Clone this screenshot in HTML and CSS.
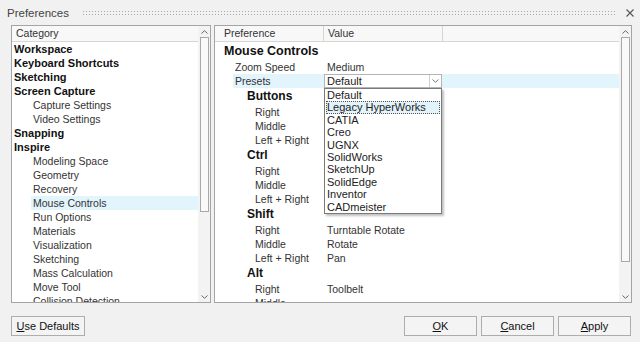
FILE: index.html
```html
<!DOCTYPE html>
<html lang="en">

<head>
    <meta charset="UTF-8">
    <meta name="viewport" content="width=device-width, initial-scale=1.0">
    <title>Preferences</title>
    <link rel="stylesheet" href="styles.css">
</head>

<body>
    <div class="dialog">
        <div class="titlebar">
            <span class="title">Preferences</span>
            <span class="grip"></span>
            <svg class="close" width="8" height="8" viewBox="0 0 8 8">
                <path d="M0.5 0.5 L7.5 7.5 M7.5 0.5 L0.5 7.5" stroke="#555" stroke-width="1.1" fill="none" />
            </svg>
        </div>

        <div class="main">
            <div class="panel leftPanel">
                <div class="list">
                    <div class="hdr">
                        <span class="hcell catCell">Category</span>
                    </div>
                    <div class="item top">Workspace</div>
                    <div class="item top">Keyboard Shortcuts</div>
                    <div class="item top">Sketching</div>
                    <div class="item top">Screen Capture</div>
                    <div class="item sub">Capture Settings</div>
                    <div class="item sub">Video Settings</div>
                    <div class="item top">Snapping</div>
                    <div class="item top">Inspire</div>
                    <div class="item sub">Modeling Space</div>
                    <div class="item sub">Geometry</div>
                    <div class="item sub">Recovery</div>
                    <div class="item sub selected">Mouse Controls</div>
                    <div class="item sub">Run Options</div>
                    <div class="item sub">Materials</div>
                    <div class="item sub">Visualization</div>
                    <div class="item sub">Sketching</div>
                    <div class="item sub">Mass Calculation</div>
                    <div class="item sub">Move Tool</div>
                    <div class="item sub">Collision Detection</div>
                </div>
                <div class="scrollbar">
                    <div class="arrow">
                        <svg width="7" height="4" viewBox="0 0 7 4"><path d="M0.5 3.5 L3.5 0.7 L6.5 3.5" stroke="#666" fill="none" /></svg>
                    </div>
                    <div class="track">
                        <div class="thumb leftThumb"></div>
                    </div>
                    <div class="arrow">
                        <svg width="7" height="4" viewBox="0 0 7 4"><path d="M0.5 0.5 L3.5 3.3 L6.5 0.5" stroke="#666" fill="none" /></svg>
                    </div>
                </div>
            </div>

            <div class="panel rightPanel">
                <div class="list">
                    <div class="hdr">
                        <span class="hcell prefCell">Preference</span>
                        <span class="hcell valCell">Value</span>
                        <span class="hcell restCell"></span>
                    </div>

                    <div class="heading">Mouse Controls</div>
                    <div class="row lvl1"><span class="label">Zoom Speed</span><span class="value">Medium</span></div>
                    <div class="row lvl1 selected">
                        <span class="label">Presets</span>
                        <span class="value">
                            <span class="combo">
                                <span class="comboText">Default</span>
                                <span class="comboBtn">
                                    <svg width="7" height="4" viewBox="0 0 7 4"><path d="M0.5 0.5 L3.5 3.3 L6.5 0.5" stroke="#777" fill="none" /></svg>
                                </span>
                                <span class="dropdown">
                                    <span class="opt">Default</span>
                                    <span class="opt focused">Legacy HyperWorks</span>
                                    <span class="opt">CATIA</span>
                                    <span class="opt">Creo</span>
                                    <span class="opt">UGNX</span>
                                    <span class="opt">SolidWorks</span>
                                    <span class="opt">SketchUp</span>
                                    <span class="opt">SolidEdge</span>
                                    <span class="opt">Inventor</span>
                                    <span class="opt">CADmeister</span>
                                </span>
                            </span>
                        </span>
                    </div>

                    <div class="group">Buttons</div>
                    <div class="row lvl2"><span class="label">Right</span><span class="value"></span></div>
                    <div class="row lvl2"><span class="label">Middle</span><span class="value"></span></div>
                    <div class="row lvl2"><span class="label">Left + Right</span><span class="value"></span></div>

                    <div class="group">Ctrl</div>
                    <div class="row lvl2"><span class="label">Right</span><span class="value"></span></div>
                    <div class="row lvl2"><span class="label">Middle</span><span class="value"></span></div>
                    <div class="row lvl2"><span class="label">Left + Right</span><span class="value"></span></div>

                    <div class="group">Shift</div>
                    <div class="row lvl2"><span class="label">Right</span><span class="value">Turntable Rotate</span></div>
                    <div class="row lvl2"><span class="label">Middle</span><span class="value">Rotate</span></div>
                    <div class="row lvl2"><span class="label">Left + Right</span><span class="value">Pan</span></div>

                    <div class="group">Alt</div>
                    <div class="row lvl2"><span class="label">Right</span><span class="value">Toolbelt</span></div>
                    <div class="row lvl2"><span class="label">Middle</span><span class="value"></span></div>
                </div>
                <div class="scrollbar">
                    <div class="arrow">
                        <svg width="7" height="4" viewBox="0 0 7 4"><path d="M0.5 3.5 L3.5 0.7 L6.5 3.5" stroke="#666" fill="none" /></svg>
                    </div>
                    <div class="track">
                        <div class="thumb rightThumb"></div>
                    </div>
                    <div class="arrow">
                        <svg width="7" height="4" viewBox="0 0 7 4"><path d="M0.5 0.5 L3.5 3.3 L6.5 0.5" stroke="#666" fill="none" /></svg>
                    </div>
                </div>
            </div>
        </div>

        <div class="footer">
            <button class="btn"><u>U</u>se Defaults</button>
            <span class="spacer"></span>
            <button class="btn"><u>O</u>K</button>
            <button class="btn"><u>C</u>ancel</button>
            <button class="btn"><u>A</u>pply</button>
        </div>
    </div>
</body>

</html>
```

FILE: styles.css
```css
body {
    margin: 0;
    overflow: hidden;
    background-color: #f1f1f1;
    font-family: "Liberation Sans", Arial, sans-serif;
    color: #222;
}

.dialog {
    width: 640px;
    height: 342px;
    display: flex;
    flex-direction: column;
}

.titlebar {
    height: 25px;
    display: flex;
    align-items: center;
}

.title {
    padding-left: 7px;
    font-size: 11.5px;
    color: #444;
}

.grip {
    flex: 1;
    height: 6px;
    margin: 0 10px 0 13px;
    background-image: radial-gradient(circle, #a8a8a8 0.8px, transparent 0.9px);
    background-size: 3px 3px;
}

.close {
    margin-right: 6px;
}

.main {
    height: 278px;
    display: flex;
    gap: 3px;
    padding: 0 8px 0 11px;
}

.panel {
    box-sizing: border-box;
    height: 100%;
    border: 1px solid #a4a4a4;
    background-color: white;
    display: flex;
    overflow: hidden;
}

.leftPanel {
    width: 200px;
}

.rightPanel {
    width: 418px;
}

.list {
    flex: 1;
    overflow: hidden;
}

.hdr {
    height: 15px;
    border-bottom: 1px solid #d6d6d6;
    background-color: #f8f8f8;
    display: flex;
    font-size: 10.5px;
    line-height: 15px;
    color: #333;
}

.hcell {
    box-sizing: border-box;
    height: 15px;
}

.catCell {
    padding-left: 4px;
}

.prefCell {
    width: 109px;
    padding-left: 9px;
    border-right: 1px solid #d6d6d6;
}

.valCell {
    width: 119px;
    padding-left: 4px;
    border-right: 1px solid #d6d6d6;
}

.item {
    height: 14px;
    line-height: 14px;
    padding-left: 2px;
    white-space: nowrap;
}

.item.top {
    font-size: 11px;
    font-weight: bold;
    color: #111;
}

.item.sub {
    margin-left: 19px;
    font-size: 10.5px;
    color: #333;
}

.selected {
    background-color: #e2f5fd;
}

.heading {
    height: 18px;
    line-height: 18px;
    padding-left: 9px;
    font-size: 12.5px;
    font-weight: bold;
    color: #111;
}

.group {
    height: 17px;
    line-height: 17px;
    padding-left: 32px;
    font-size: 12px;
    font-weight: bold;
    color: #111;
}

.row {
    height: 14px;
    line-height: 14px;
    display: flex;
    font-size: 10.5px;
    color: #333;
    white-space: nowrap;
}

.row.lvl1 {
    margin-left: 18px;
}

.row.lvl2 {
    margin-left: 38px;
}

.label {
    box-sizing: border-box;
    padding-left: 2px;
}

.lvl1 .label {
    width: 91px;
}

.lvl2 .label {
    width: 71px;
}

.value {
    padding-left: 3px;
    flex: 1;
}

.lvl1.selected .value {
    padding-left: 0;
}

.combo {
    position: relative;
    box-sizing: border-box;
    display: flex;
    width: 118px;
    height: 14px;
    border: 1px solid #b4b4b4;
    background-color: white;
    line-height: 12px;
}

.comboText {
    flex: 1;
    padding-left: 2px;
    font-size: 11px;
    color: #222;
}

.comboBtn {
    width: 11px;
    border-left: 1px solid #d0d0d0;
    display: flex;
    align-items: center;
    justify-content: center;
}

.dropdown {
    position: absolute;
    top: 13px;
    left: -1px;
    box-sizing: border-box;
    width: 118px;
    padding: 0 1px;
    border: 1px solid #7a7a7a;
    background-color: white;
    box-shadow: 2px 2px 2px rgba(0, 0, 0, 0.25);
    display: flex;
    flex-direction: column;
}

.opt {
    box-sizing: border-box;
    height: 12.4px;
    line-height: 12.4px;
    padding-left: 1px;
    font-size: 11px;
    color: #222;
}

.opt.focused {
    background-color: #e2f3fb;
    outline: 1px dotted #555;
    outline-offset: -1px;
}

.scrollbar {
    width: 12px;
    background-color: #f3f3f3;
    display: flex;
    flex-direction: column;
}

.arrow {
    height: 11px;
    display: flex;
    align-items: center;
    justify-content: center;
}

.track {
    flex: 1;
}

.thumb {
    box-sizing: border-box;
    width: 9px;
    margin-left: 2px;
    border: 1px solid #a8a8a8;
    background-color: #f9f9f9;
}

.leftThumb {
    height: 175px;
}

.rightThumb {
    height: 225px;
}

.footer {
    flex: 1;
    display: flex;
    align-items: flex-start;
    gap: 4px;
    padding: 13px 9px 0 11px;
}

.spacer {
    flex: 1;
}

.btn {
    box-sizing: border-box;
    width: 73px;
    height: 20px;
    padding: 0;
    border: 1px solid #adadad;
    border-radius: 0;
    background-color: #f4f4f4;
    font-family: "Liberation Sans", Arial, sans-serif;
    font-size: 11px;
    color: #111;
}

.btn:first-child {
    width: 74px;
}
```
